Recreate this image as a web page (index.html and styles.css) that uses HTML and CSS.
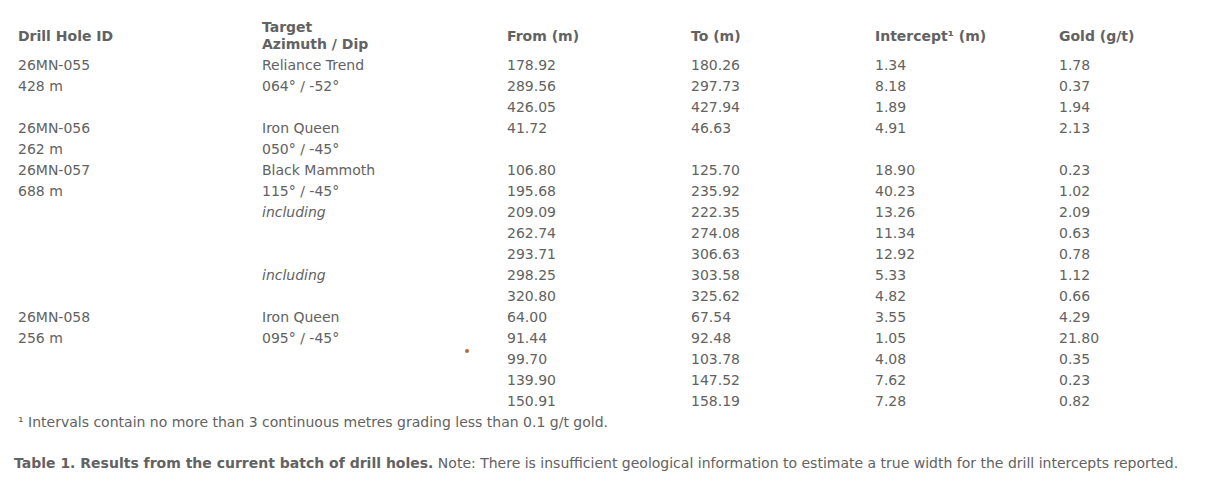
FILE: index.html
```html
<!DOCTYPE html>
<html lang="en">
<head>
<meta charset="utf-8">
<title>Drill results</title>
<link rel="stylesheet" href="styles.css">
</head>
<body>
<div class="page">
  <table class="results">
    <colgroup>
      <col class="c1"><col class="c2"><col class="c3"><col class="c4"><col class="c5"><col class="c6">
    </colgroup>
    <thead>
      <tr>
        <th>Drill Hole ID</th>
        <th>Target<br>Azimuth / Dip</th>
        <th>From (m)</th>
        <th>To (m)</th>
        <th>Intercept¹ (m)</th>
        <th>Gold (g/t)</th>
      </tr>
    </thead>
    <tbody>
      <tr><td>26MN-055</td><td>Reliance Trend</td><td>178.92</td><td>180.26</td><td>1.34</td><td>1.78</td></tr>
      <tr><td>428 m</td><td>064° / -52°</td><td>289.56</td><td>297.73</td><td>8.18</td><td>0.37</td></tr>
      <tr><td></td><td></td><td>426.05</td><td>427.94</td><td>1.89</td><td>1.94</td></tr>
      <tr><td>26MN-056</td><td>Iron Queen</td><td>41.72</td><td>46.63</td><td>4.91</td><td>2.13</td></tr>
      <tr><td>262 m</td><td>050° / -45°</td><td></td><td></td><td></td><td></td></tr>
      <tr><td>26MN-057</td><td>Black Mammoth</td><td>106.80</td><td>125.70</td><td>18.90</td><td>0.23</td></tr>
      <tr><td>688 m</td><td>115° / -45°</td><td>195.68</td><td>235.92</td><td>40.23</td><td>1.02</td></tr>
      <tr><td></td><td><em>including</em></td><td>209.09</td><td>222.35</td><td>13.26</td><td>2.09</td></tr>
      <tr><td></td><td></td><td>262.74</td><td>274.08</td><td>11.34</td><td>0.63</td></tr>
      <tr><td></td><td></td><td>293.71</td><td>306.63</td><td>12.92</td><td>0.78</td></tr>
      <tr><td></td><td><em>including</em></td><td>298.25</td><td>303.58</td><td>5.33</td><td>1.12</td></tr>
      <tr><td></td><td></td><td>320.80</td><td>325.62</td><td>4.82</td><td>0.66</td></tr>
      <tr><td>26MN-058</td><td>Iron Queen</td><td>64.00</td><td>67.54</td><td>3.55</td><td>4.29</td></tr>
      <tr><td>256 m</td><td>095° / -45°<span class="dot"></span></td><td>91.44</td><td>92.48</td><td>1.05</td><td>21.80</td></tr>
      <tr><td></td><td></td><td>99.70</td><td>103.78</td><td>4.08</td><td>0.35</td></tr>
      <tr><td></td><td></td><td>139.90</td><td>147.52</td><td>7.62</td><td>0.23</td></tr>
      <tr><td></td><td></td><td>150.91</td><td>158.19</td><td>7.28</td><td>0.82</td></tr>
    </tbody>
  </table>
  <p class="footnote">¹ Intervals contain no more than 3 continuous metres grading less than 0.1 g/t gold.</p>
  <p class="caption"><strong>Table 1. Results from the current batch of drill holes.</strong> Note: There is insufficient geological information to estimate a true width for the drill intercepts reported.</p>
</div>
</body>
</html>
```

FILE: styles.css
```css
html, body {
  margin: 0;
  padding: 0;
  background: #ffffff;
}

.page {
  padding: 17px 0 0 14px;
  color: #626262;
}

.results {
  border-collapse: collapse;
  font-family: "DejaVu Sans", Verdana, sans-serif;
  font-size: 14px;
  line-height: 17px;
  width: 1183px;
}

.c1 { width: 244px; }
.c2 { width: 245px; }
.c3 { width: 184px; }
.c4 { width: 184px; }
.c5 { width: 184px; }
.c6 { width: auto; }

.results th,
.results td {
  text-align: left;
  vertical-align: middle;
  padding: 2px 4px;
  height: 17px;
}

.results th {
  font-weight: bold;
}

.results td {
  position: relative;
}

.results em {
  font-style: italic;
}

.dot {
  position: absolute;
  left: 207px;
  top: 21px;
  width: 4px;
  height: 4px;
  border-radius: 50%;
  background: #b06a42;
}

.footnote {
  margin: 0;
  padding: 2px 4px;
  font-family: "DejaVu Sans", Tahoma, sans-serif;
  font-size: 14px;
  line-height: 17px;
}

.caption {
  margin: 22px 0 0 0;
  font-family: "DejaVu Sans", Tahoma, sans-serif;
  font-size: 14px;
  line-height: 17px;
}
```
